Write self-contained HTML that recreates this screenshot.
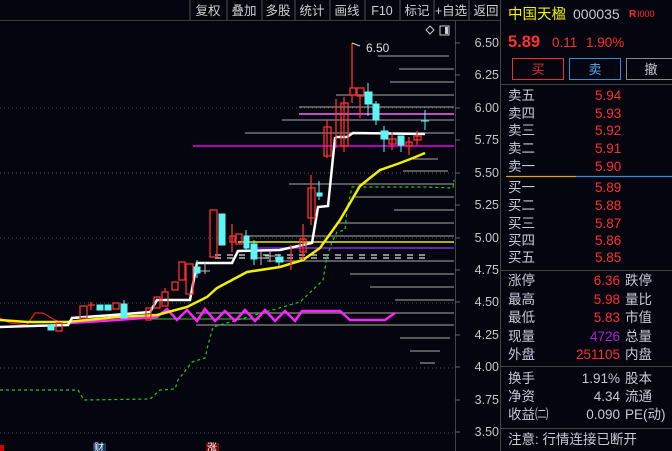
<!DOCTYPE html><html><head><meta charset="utf-8"><style>
body{margin:0;background:#05050f;width:672px;height:451px;overflow:hidden;font-family:"Liberation Sans","Noto Sans CJK SC",sans-serif}
svg{position:absolute;left:0;top:0}
</style></head><body>
<svg width="672" height="451" viewBox="0 0 672 451" font-family="Liberation Sans, Noto Sans CJK SC, sans-serif">
<rect width="672" height="451" fill="#05050f"/>
<line x1="0" y1="20.5" x2="500" y2="20.5" stroke="#3a3a3a"/>
<g stroke="#3a3a3a" stroke-width="1.5">
<line x1="190" y1="0" x2="190" y2="20"/><line x1="227" y1="0" x2="227" y2="20"/><line x1="262" y1="0" x2="262" y2="20"/><line x1="295" y1="0" x2="295" y2="20"/><line x1="330" y1="0" x2="330" y2="20"/><line x1="365" y1="0" x2="365" y2="20"/><line x1="400" y1="0" x2="400" y2="20"/><line x1="434" y1="0" x2="434" y2="20"/><line x1="469" y1="0" x2="469" y2="20"/>
</g>
<g fill="#d0d0d0" font-size="12.5" text-anchor="middle">
<text x="208" y="15">复权</text><text x="244" y="15">叠加</text><text x="278" y="15">多股</text><text x="312" y="15">统计</text><text x="347" y="15">画线</text><text x="382" y="15">F10</text><text x="417" y="15">标记</text><text x="451" y="15">+自选</text><text x="486" y="15">返回</text>
</g>
<path d="M426 30 L430 26 L434 30 L430 34Z" fill="none" stroke="#ccc"/>
<rect x="440" y="26" width="9" height="9" fill="none" stroke="#ccc"/><rect x="445" y="27" width="3" height="7" fill="#ccc"/>
<g stroke="#555" stroke-dasharray="1,3">
<line x1="0" y1="108" x2="455" y2="108"/><line x1="0" y1="173" x2="455" y2="173"/><line x1="0" y1="238" x2="455" y2="238"/><line x1="0" y1="303" x2="455" y2="303"/><line x1="0" y1="368" x2="455" y2="368"/><line x1="0" y1="433" x2="455" y2="433"/>
</g>
<line x1="455.5" y1="20" x2="455.5" y2="451" stroke="#444"/>
<g stroke="#666"><line x1="455" y1="43" x2="460" y2="43"/><line x1="455" y1="75" x2="460" y2="75"/><line x1="455" y1="108" x2="460" y2="108"/><line x1="455" y1="140" x2="460" y2="140"/><line x1="455" y1="173" x2="460" y2="173"/><line x1="455" y1="205" x2="460" y2="205"/><line x1="455" y1="238" x2="460" y2="238"/><line x1="455" y1="270" x2="460" y2="270"/><line x1="455" y1="302" x2="460" y2="302"/><line x1="455" y1="335" x2="460" y2="335"/><line x1="455" y1="367" x2="460" y2="367"/><line x1="455" y1="400" x2="460" y2="400"/><line x1="455" y1="432" x2="460" y2="432"/></g>
<g fill="#c8c8c8" font-size="12.5" text-anchor="end">
<text x="499" y="47">6.50</text><text x="499" y="79">6.25</text><text x="499" y="112">6.00</text><text x="499" y="144">5.75</text><text x="499" y="177">5.50</text><text x="499" y="209">5.25</text><text x="499" y="242">5.00</text><text x="499" y="274">4.75</text><text x="499" y="306">4.50</text><text x="499" y="339">4.25</text><text x="499" y="371">4.00</text><text x="499" y="404">3.75</text><text x="499" y="436">3.50</text>
</g>
<g stroke="#8a8a8a" stroke-width="1.3">
<line x1="399" y1="69" x2="454" y2="69"/><line x1="390" y1="82" x2="454" y2="82"/><line x1="336" y1="95" x2="454" y2="95"/><line x1="299" y1="107" x2="454" y2="107"/><line x1="282" y1="120" x2="454" y2="120"/><line x1="245" y1="133" x2="454" y2="133"/><line x1="413" y1="159" x2="438" y2="159"/><line x1="403" y1="171" x2="448" y2="171"/><line x1="289" y1="184" x2="454" y2="184"/><line x1="355" y1="197" x2="454" y2="197"/><line x1="394" y1="210" x2="454" y2="210"/><line x1="337" y1="223" x2="454" y2="223"/><line x1="245" y1="236" x2="454" y2="236"/><line x1="267" y1="261" x2="454" y2="261"/><line x1="350" y1="274" x2="454" y2="274"/><line x1="370" y1="287" x2="454" y2="287"/><line x1="395" y1="300" x2="454" y2="300"/><line x1="196" y1="313" x2="454" y2="313"/><line x1="196" y1="325" x2="454" y2="325"/><line x1="400" y1="338" x2="450" y2="338"/><line x1="410" y1="351" x2="440" y2="351"/><line x1="420" y1="363" x2="435" y2="363"/>
<line x1="378" y1="56" x2="449" y2="56"/>
</g>
<line x1="299" y1="114" x2="454" y2="114" stroke="#ff66ff" stroke-width="1.5"/>
<line x1="193" y1="146" x2="454" y2="146" stroke="#ee00ee" stroke-width="1.5"/>
<line x1="238" y1="242" x2="454" y2="242" stroke="#e8e800" stroke-width="1.5"/>
<line x1="256" y1="248" x2="454" y2="248" stroke="#8a2be2" stroke-width="1.5"/>
<g stroke="#ddd" stroke-width="1.3" stroke-dasharray="6,6"><line x1="215" y1="255" x2="425" y2="255"/><line x1="215" y1="258" x2="425" y2="258"/></g>
<polyline fill="none" stroke="#22cc22" stroke-width="1.2" stroke-dasharray="3,3" points="0,390 78,390 84,400 150,399 160,390 175,389 178,380 192,362 205,358 208,345 213,327 300,302 318,285 323,280 327,257 332,242 337,232 345,230 347,210 352,187 425,187 453,188 454,180"/>
<line x1="150" y1="319" x2="260" y2="319" stroke="#22cc22" stroke-width="1"/>
<polyline fill="none" stroke="#e02020" stroke-width="1.2" points="0,318 10,323 27,325 35,313 43,313 55,320 63,323"/>
<polyline fill="none" stroke="#ff22ff" stroke-width="2.5" points="70,323 117,320 157,317 167,309 177,320 187,310 197,321 205,309 215,321 225,311 235,321 245,310 255,321 265,310 275,321 285,311 295,321 302,311 340,311 350,320 385,320 395,313"/>
<polyline fill="none" stroke="#f0f000" stroke-width="2.5" points="0,320 27,322 67,322 117,317 157,315 187,307 207,297 217,288 232,280 247,272 280,267 303,260 320,248 340,220 360,186 380,170 400,163 413,158 425,153"/>
<polyline fill="none" stroke="#ffffff" stroke-width="2.5" points="0,327 30,326 68,325 72,318 113,315 150,312 157,300 190,300 197,263 232,263 238,251 280,250 312,243 318,207 328,206 335,138 337,137 347,137 353,133 425,134"/>
<g stroke="#ff3030" stroke-width="1.3" fill="none">
<rect x="56" y="323" width="6" height="8"/><rect x="80" y="306" width="7" height="12"/><line x1="91" y1="302" x2="91" y2="310"/><line x1="88" y1="305" x2="95" y2="305"/>
<rect x="113" y="303" width="6" height="6"/><rect x="146" y="308" width="5" height="12"/><rect x="154" y="297" width="6" height="11"/><rect x="162" y="292" width="6" height="14"/><line x1="165" y1="288" x2="165" y2="292"/>
<rect x="172" y="282" width="6" height="8"/><rect x="179" y="262" width="6" height="18"/><rect x="186" y="264" width="7" height="30"/>
<rect x="210" y="210" width="7" height="47"/><rect x="230" y="236" width="5" height="6"/><line x1="232" y1="224" x2="232" y2="252"/><rect x="236" y="234" width="6" height="10"/>
<line x1="291" y1="245" x2="291" y2="270"/><rect x="300" y="239" width="6" height="13"/><line x1="303" y1="224" x2="303" y2="260"/>
<rect x="308" y="188" width="7" height="30"/><line x1="311" y1="175" x2="311" y2="225"/>
<rect x="324" y="127" width="7" height="29"/><line x1="327" y1="120" x2="327" y2="158"/>
<line x1="336" y1="99" x2="336" y2="148"/><rect x="341" y="103" width="7" height="43"/><line x1="344" y1="97" x2="344" y2="152"/>
<rect x="350" y="88" width="6" height="7"/><line x1="352" y1="43" x2="352" y2="88"/><line x1="352" y1="95" x2="352" y2="103"/>
<rect x="357" y="88" width="7" height="8"/><line x1="360" y1="96" x2="360" y2="118"/>
<rect x="389" y="139" width="7" height="5"/><line x1="392" y1="132" x2="392" y2="150"/>
<rect x="406" y="142" width="6" height="4"/><line x1="409" y1="137" x2="409" y2="155"/>
<rect x="414" y="136" width="7" height="4"/><line x1="417" y1="131" x2="417" y2="145"/>
</g>
<line x1="352" y1="43" x2="360" y2="46" stroke="#ddd"/><text x="366" y="52" fill="#ddd" font-size="12">6.50</text>
<g fill="#5ff5f5" stroke="#5ff5f5" stroke-width="1">
<rect x="48" y="325" width="6" height="5"/><rect x="97" y="305" width="6" height="5"/><rect x="105" y="305" width="6" height="5"/><rect x="121" y="304" width="6" height="14"/><line x1="124" y1="300" x2="124" y2="318"/>
<rect x="194" y="267" width="6" height="6"/><line x1="197" y1="260" x2="197" y2="278"/>
<rect x="219" y="214" width="6" height="31"/><rect x="244" y="236" width="5" height="12"/><line x1="246" y1="230" x2="246" y2="250"/><rect x="251" y="244" width="6" height="15"/><line x1="254" y1="240" x2="254" y2="265"/>
<rect x="276" y="257" width="7" height="5"/><line x1="279" y1="254" x2="279" y2="266"/><rect x="317" y="193" width="5" height="3"/><line x1="319" y1="181" x2="319" y2="200"/>
<rect x="365" y="92" width="7" height="12"/><line x1="368" y1="83" x2="368" y2="116"/><rect x="373" y="104" width="6" height="16"/><line x1="376" y1="101" x2="376" y2="125"/>
<rect x="381" y="131" width="7" height="8"/><line x1="384" y1="126" x2="384" y2="152"/><rect x="398" y="136" width="6" height="9"/><line x1="401" y1="145" x2="401" y2="152"/>
<line x1="425" y1="110" x2="425" y2="130"/><line x1="421" y1="121" x2="429" y2="121"/>
</g>
<g stroke="#bbb"><line x1="261" y1="252" x2="261" y2="265"/><line x1="256" y1="258" x2="266" y2="258"/><line x1="270" y1="250" x2="270" y2="262"/><line x1="265" y1="256" x2="275" y2="256"/><line x1="205" y1="262" x2="205" y2="274"/><line x1="200" y1="271" x2="210" y2="271"/></g>
<rect x="93" y="443" width="13" height="8" fill="#143a66"/><text x="94" y="451" fill="#fff" font-size="10">财</text>
<rect x="206" y="443" width="13" height="8" fill="#7a0a0a"/><text x="207" y="451" fill="#fff" font-size="10">涨</text>
<rect x="0" y="445" width="4" height="6" fill="#c00"/>
<line x1="500.5" y1="0" x2="500.5" y2="451" stroke="#444"/>
<text x="508" y="19" fill="#f0f000" font-size="14.5">中国天楹</text>
<text x="573" y="19" fill="#c8c8d8" font-size="14">000035</text>
<text x="629" y="17" fill="#ff3030" font-size="10" font-weight="bold">R</text><text x="637" y="17" fill="#ff3030" font-size="9">I000</text>
<text x="508" y="47" fill="#ff3030" font-size="16.5" font-weight="bold">5.89</text>
<text x="552" y="47" fill="#ff3030" font-size="13.5">0.11</text>
<text x="586" y="47" fill="#ff3030" font-size="13.5">1.90%</text>
<rect x="512.5" y="58.5" width="51" height="21" fill="none" stroke="#e83030"/><text x="538" y="74" fill="#e83030" font-size="13" text-anchor="middle">买</text>
<rect x="569.5" y="58.5" width="51" height="21" fill="none" stroke="#3a8ad8"/><text x="595" y="74" fill="#5aaaf0" font-size="13" text-anchor="middle">卖</text>
<rect x="626.5" y="58.5" width="50" height="21" fill="none" stroke="#888"/><text x="651" y="74" fill="#ccc" font-size="13" text-anchor="middle">撤</text>
<line x1="501" y1="84.5" x2="672" y2="84.5" stroke="#444"/>
<g fill="#c8c8d8" font-size="13.5">
<text x="508" y="100">卖五</text><text x="508" y="118">卖四</text><text x="508" y="135">卖三</text><text x="508" y="153">卖二</text><text x="508" y="171">卖一</text>
<text x="508" y="192">买一</text><text x="508" y="210">买二</text><text x="508" y="228">买三</text><text x="508" y="245">买四</text><text x="508" y="262">买五</text>
</g>
<g fill="#ff3030" font-size="13.5">
<text x="595" y="100">5.94</text><text x="595" y="118">5.93</text><text x="595" y="135">5.92</text><text x="595" y="153">5.91</text><text x="595" y="171">5.90</text>
<text x="595" y="192">5.89</text><text x="595" y="210">5.88</text><text x="595" y="228">5.87</text><text x="595" y="245">5.86</text><text x="595" y="262">5.85</text>
</g>
<line x1="506" y1="176.5" x2="576" y2="176.5" stroke="#e0a020" stroke-width="1.2"/><line x1="576" y1="176.5" x2="672" y2="176.5" stroke="#3a8ad8" stroke-width="1.2"/>
<line x1="501" y1="270.5" x2="672" y2="270.5" stroke="#444"/>
<g fill="#c8c8d8" font-size="13.5">
<text x="508" y="285">涨停</text><text x="508" y="304">最高</text><text x="508" y="322">最低</text><text x="508" y="341">现量</text><text x="508" y="359">外盘</text>
<text x="625" y="285">跌停</text><text x="625" y="304">量比</text><text x="625" y="322">市值</text><text x="625" y="341">总量</text><text x="625" y="359">内盘</text>
<text x="508" y="383">换手</text><text x="508" y="401">净资</text><text x="508" y="419">收益㈡</text>
<text x="625" y="383">股本</text><text x="625" y="401">流通</text><text x="625" y="419">PE(动)</text>
</g>
<g font-size="13.5" text-anchor="end">
<text x="620" y="285" fill="#ff3030">6.36</text><text x="620" y="304" fill="#ff3030">5.98</text><text x="620" y="322" fill="#ff3030">5.83</text><text x="620" y="341" fill="#b020e0">4726</text><text x="620" y="359" fill="#ff3030">251105</text>
<text x="620" y="383" fill="#c8c8d8">1.91%</text><text x="620" y="401" fill="#c8c8d8">4.34</text><text x="620" y="419" fill="#c8c8d8">0.090</text>
</g>
<line x1="501" y1="366.5" x2="672" y2="366.5" stroke="#444"/>
<line x1="501" y1="428.5" x2="672" y2="428.5" stroke="#444"/>
<text x="508" y="444" fill="#c8c8d8" font-size="13.5">注意: 行情连接已断开</text>
</svg>
</body></html>
